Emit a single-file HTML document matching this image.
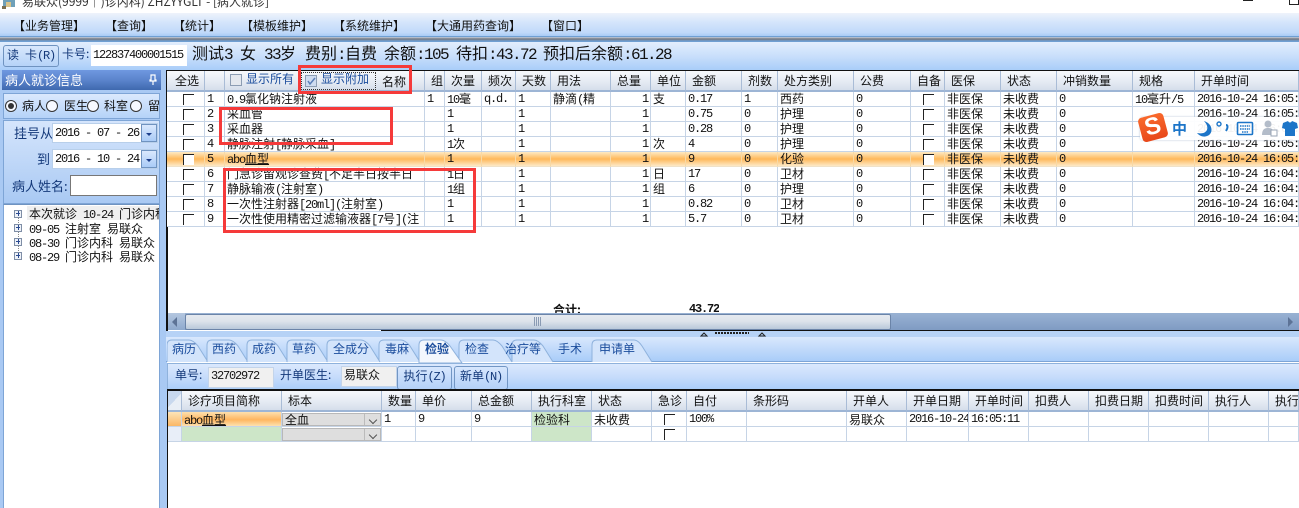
<!DOCTYPE html>
<html><head><meta charset="utf-8"><style>
html,body{margin:0;padding:0}
body{width:1299px;height:508px;overflow:hidden;position:relative;background:#fff;font:12px/15px "WenQuanYi Zen Hei","Noto Sans CJK SC",sans-serif;color:#111}
.a,.a *{box-sizing:border-box}
.a{position:absolute;white-space:pre}
.b{color:#14397a}
.m{font-family:"Liberation Mono",monospace;font-weight:normal;letter-spacing:-1.2px;font-size:12px}
.n{font-family:"Liberation Mono",monospace;font-weight:normal;letter-spacing:-1.6px;font-size:16px}
span.m,span.n{line-height:1px}
table{border-collapse:separate;border-spacing:0;table-layout:fixed;position:absolute;left:167px;width:1132px;background:#fff}
td,th{height:15px;padding:0 0 0 2px;border-right:1px solid #c6d4e6;border-bottom:1px solid #c6d4e6;overflow:hidden;white-space:pre;font-weight:normal;text-align:left;line-height:14px;box-sizing:border-box}
th{height:20px;background:linear-gradient(#f7f9fc,#e9eef5 45%,#d5deeb);border-right:1px solid #a9bcd6;border-bottom:2px solid #9db5d5;padding:0 0 0 6px;line-height:19px}
.t td:nth-child(2),.t td:nth-child(7),.t td:nth-child(9),.t td:nth-child(11),.t td:nth-child(12),.t td:nth-child(14),.t td:nth-child(18),.t td:nth-child(20),.t td:nth-child(4){font-family:"Liberation Mono",monospace;letter-spacing:-1.2px}
.r{text-align:right;padding-right:2px}
.o td{background:linear-gradient(#fde9c4,#ffb85a 50%,#fdeac8);border-right-color:#f7d9a6;border-bottom-color:#f0e2c8}
.k{display:block;width:10px;height:10px;border-left:1px solid #222;border-top:1px solid #222;margin:1px auto 0 14px}
.kw{background:#fff}
.rd{position:absolute;width:12px;height:12px;border-radius:50%;border:1px solid #333;background:#f6f9ff;top:100px;box-sizing:border-box}
.red{position:absolute;border:3px solid #f53a3a;box-sizing:border-box}
.pm{position:absolute;left:14px;width:8px;height:8px;border:1px solid #7f8ea6;background:#eef2f8}
.pm:before{content:"";position:absolute;left:1px;top:2px;width:4px;height:1px;background:#2b4a90}
.pm:after{content:"";position:absolute;left:3px;top:0;width:1px;height:5px;background:#2b4a90}
.g{background:#cde6c8!important}
.sel{position:relative;height:13px;margin-left:-1px;background:#dedede;border:1px solid #b8b8b8;line-height:11px;padding-left:2px;box-sizing:border-box}
.sel:after{content:"";position:absolute;right:4px;top:3px;width:5px;height:5px;border-right:1px solid #555;border-bottom:1px solid #555;transform:rotate(45deg)}
.sel:before{content:"";position:absolute;right:15px;top:0;bottom:0;width:1px;background:#bbb}
</style></head><body>

<!-- title -->
<div class="a" style="left:0;top:0;width:1299px;height:13px;overflow:hidden;background:#fff">
<svg class="a" style="left:1px;top:0" width="16" height="9"><rect x="2" y="0" width="12" height="7" fill="#6fa0b8"/><rect x="5" y="2" width="5" height="5" fill="#d9c38a"/><rect x="1" y="6" width="4" height="3" fill="#7a6f52"/></svg>
<div class="a" style="left:22px;top:-6px;font-size:12px;line-height:15px;color:#333">易联众(9999｜)诊内科) ZHZYYGLT - [病人就诊]</div>
<div class="a" style="left:1243px;top:0;width:10px;height:1px;background:#222"></div>
<div class="a" style="left:1289px;top:0;width:10px;height:5px;border:1px solid #222;border-top:0"></div>
</div>

<!-- menu -->
<div class="a" style="left:0;top:13px;width:1299px;height:24px;background:linear-gradient(#eef3fb,#d4e5fb 40%,#c0d9f9 85%,#a8cbf5);border-bottom:1px solid #6f9fd2">
<span class="a" style="left:13px;top:5px">【业务管理】</span>
<span class="a" style="left:105px;top:5px">【查询】</span>
<span class="a" style="left:173px;top:5px">【统计】</span>
<span class="a" style="left:241px;top:5px">【模板维护】</span>
<span class="a" style="left:333px;top:5px">【系统维护】</span>
<span class="a" style="left:425px;top:5px">【大通用药查询】</span>
<span class="a" style="left:541px;top:5px">【窗口】</span>
</div>
<div class="a" style="left:0;top:37px;width:1299px;height:4px;background:linear-gradient(#c4d3e6,#77797e 50%,#6f9fd2)"></div>

<!-- toolbar -->
<div class="a" style="left:0;top:41px;width:1299px;height:29px;background:linear-gradient(#e2eefd,#c9dffb 50%,#a9cdf9);border-top:1px solid #6f9fd2">
<div class="a b" style="left:3px;top:3px;width:56px;height:22px;border:1px solid #6f93c0;border-radius:3px;background:linear-gradient(#d8e8fc,#b6d3f8);padding-left:3px;line-height:18px">读<span class="m"> </span>卡<span class="m">(R)</span></div>
<span class="a b" style="left:62px;top:4px">卡号:</span>
<div class="a m" style="left:91px;top:3px;width:96px;height:21px;background:#fff;line-height:20px;padding-left:2px">122837400001515</div>
<span class="a" style="left:192px;top:0;font-size:16px;line-height:20px">测试<span class="n">3</span></span>
<span class="a" style="left:240px;top:0;font-size:16px;line-height:20px">女</span>
<span class="a" style="left:264px;top:0;font-size:16px;line-height:20px"><span class="n">33</span>岁</span>
<span class="a" style="left:305px;top:0;font-size:16px;line-height:20px">费别<span class="n">:</span>自费</span>
<span class="a" style="left:384px;top:0;font-size:16px;line-height:20px">余额<span class="n">:105</span></span>
<span class="a" style="left:456px;top:0;font-size:16px;line-height:20px">待扣<span class="n">:43.72</span></span>
<span class="a" style="left:543px;top:0;font-size:16px;line-height:20px">预扣后余额<span class="n">:61.28</span></span>
</div>

<!-- left panel -->
<div class="a" style="left:0;top:70px;width:167px;height:438px;background:#a9c9f3"></div>
<div class="a" style="left:2px;top:70px;width:159px;height:20px;background:linear-gradient(#6f98e0,#5b84cc 50%,#3f69ae);color:#fff;font-size:13px;line-height:19px;padding-left:3px">病人就诊信息</div>
<svg class="a" style="left:148px;top:74px" width="10" height="12"><path d="M3 1h4v5h1v1H2V6h1zM5 7v4" fill="none" stroke="#fff" stroke-width="1.2"/></svg>
<div class="a" style="left:3px;top:93px;width:157px;height:26px;background:linear-gradient(#dbe9fd,#b5d3f8);border:1px solid #7ea5d6"></div>
<div class="rd" style="left:5px"><div class="a" style="left:2px;top:2px;width:6px;height:6px;border-radius:50%;background:#333"></div></div>
<span class="a" style="left:22px;top:98px">病人</span>
<div class="rd" style="left:46px"></div><span class="a" style="left:64px;top:98px">医生</span>
<div class="rd" style="left:87px"></div><span class="a" style="left:104px;top:98px">科室</span>
<div class="rd" style="left:130px"></div><span class="a" style="left:148px;top:98px">留</span>
<div class="a" style="left:3px;top:120px;width:157px;height:84px;background:linear-gradient(#d5e5fc,#a9c9f3);border:1px solid #7ea5d6"></div>
<span class="a b" style="left:14px;top:125px;font-size:13px">挂号从</span>
<div class="a m" style="left:52px;top:123px;width:106px;height:20px;background:#fff;border:1px solid #b8cfea;line-height:18px;padding-left:2px">2016 - 07 - 26</div>
<div class="a" style="left:141px;top:124px;width:16px;height:18px;background:linear-gradient(#d9e8fd,#a9cbf7);border:1px solid #6f93c0"><div class="a" style="left:4px;top:8px;border:3px solid transparent;border-top:3px solid #1c3f8c;border-bottom:0"></div></div>
<span class="a b" style="left:37px;top:151px;font-size:13px">到</span>
<div class="a m" style="left:52px;top:149px;width:106px;height:20px;background:#fff;border:1px solid #b8cfea;line-height:18px;padding-left:2px">2016 - 10 - 24</div>
<div class="a" style="left:141px;top:150px;width:16px;height:18px;background:linear-gradient(#d9e8fd,#a9cbf7);border:1px solid #6f93c0"><div class="a" style="left:4px;top:8px;border:3px solid transparent;border-top:3px solid #1c3f8c;border-bottom:0"></div></div>
<span class="a b" style="left:12px;top:178px;font-size:13px">病人姓名:</span>
<div class="a" style="left:70px;top:175px;width:87px;height:21px;background:#fff;border:1px solid #777"></div>
<div class="a" style="left:3px;top:204px;width:157px;height:304px;background:#fff;border-top:1px solid #6f93c0;border-left:1px solid #7ea5d6;border-right:1px solid #7ea5d6;overflow:hidden">
<div class="a" style="left:23px;top:1px;width:134px;height:14px;background:#efefef"></div>
<div class="a" style="left:14px;top:10px;width:0;height:44px;border-left:1px dotted #888"></div>
<div class="pm" style="left:10px;top:5px"></div><span class="a" style="left:25px;top:1px">本次就诊<span class="m"> 10-24 </span>门诊内科</span>
<div class="pm" style="left:10px;top:19px"></div><span class="a" style="left:25px;top:16px"><span class="m">09-05 </span>注射室<span class="m"> </span>易联众</span>
<div class="pm" style="left:10px;top:33px"></div><span class="a" style="left:25px;top:30px"><span class="m">08-30 </span>门诊内科<span class="m"> </span>易联众</span>
<div class="pm" style="left:10px;top:47px"></div><span class="a" style="left:25px;top:44px"><span class="m">08-29 </span>门诊内科<span class="m"> </span>易联众</span>
</div>

<!-- main black edges -->
<div class="a" style="left:166px;top:70px;width:1133px;height:2px;background:#111"></div>
<div class="a" style="left:166px;top:70px;width:2px;height:261px;background:#111"></div>

<!-- top table -->
<table class="t" style="top:71px">
<colgroup><col width="38"><col width="20"><col width="200"><col width="20"><col width="37"><col width="34"><col width="35"><col width="60"><col width="40"><col width="35"><col width="56"><col width="36"><col width="76"><col width="57"><col width="34"><col width="56"><col width="56"><col width="76"><col width="62"><col width="104"></colgroup>
<tr><th style="padding-left:8px">全选</th><th></th><th></th><th>组</th><th>次量</th><th>频次</th><th>天数</th><th>用法</th><th>总量</th><th>单位</th><th>金额</th><th>剂数</th><th>处方类别</th><th>公费</th><th>自备</th><th>医保</th><th>状态</th><th>冲销数量</th><th>规格</th><th>开单时间</th></tr>
<tr><td><i class="k"></i></td><td>1</td><td><span class="m">0.9</span>氯化钠注射液</td><td>1</td><td><span class="m">10</span>毫</td><td class="m">q.d.</td><td>1</td><td>静滴<span class="m">(</span>精</td><td class="r">1</td><td>支</td><td>0.17</td><td>1</td><td>西药</td><td>0</td><td><i class="k" style="margin-left:10px"></i></td><td>非医保</td><td>未收费</td><td>0</td><td><span class="m">10</span>毫升<span class="m">/5</span></td><td>2016-10-24 16:05:</td></tr>
<tr><td><i class="k"></i></td><td>2</td><td>采血管</td><td></td><td class="m">1</td><td></td><td>1</td><td></td><td class="r">1</td><td></td><td>0.75</td><td>0</td><td>护理</td><td>0</td><td><i class="k" style="margin-left:10px"></i></td><td>非医保</td><td>未收费</td><td>0</td><td></td><td>2016-10-24 16:05:</td></tr>
<tr><td><i class="k"></i></td><td>3</td><td>采血器</td><td></td><td class="m">1</td><td></td><td>1</td><td></td><td class="r">1</td><td></td><td>0.28</td><td>0</td><td>护理</td><td>0</td><td><i class="k" style="margin-left:10px"></i></td><td>非医保</td><td>未收费</td><td>0</td><td></td><td>2016-10-24 16:05:</td></tr>
<tr><td><i class="k"></i></td><td>4</td><td>静脉注射<span class="m">[</span>静脉采血<span class="m">]</span></td><td></td><td><span class="m">1</span>次</td><td></td><td>1</td><td></td><td class="r">1</td><td>次</td><td>4</td><td>0</td><td>护理</td><td>0</td><td><i class="k" style="margin-left:10px"></i></td><td>非医保</td><td>未收费</td><td>0</td><td></td><td>2016-10-24 16:05:</td></tr>
<tr class="o"><td><i class="k kw"></i></td><td>5</td><td><span class="m">abo</span><u>血型</u></td><td></td><td class="m">1</td><td></td><td>1</td><td></td><td class="r">1</td><td></td><td>9</td><td>0</td><td>化验</td><td>0</td><td><i class="k kw" style="margin-left:10px"></i></td><td>非医保</td><td>未收费</td><td>0</td><td></td><td>2016-10-24 16:05:</td></tr>
<tr><td><i class="k"></i></td><td>6</td><td>门急诊留观诊查费<span class="m">[</span>不足半日按半日</td><td></td><td><span class="m">1</span>日</td><td></td><td>1</td><td></td><td class="r">1</td><td>日</td><td>17</td><td>0</td><td>卫材</td><td>0</td><td><i class="k" style="margin-left:10px"></i></td><td>非医保</td><td>未收费</td><td>0</td><td></td><td>2016-10-24 16:04:</td></tr>
<tr><td><i class="k"></i></td><td>7</td><td>静脉输液<span class="m">(</span>注射室<span class="m">)</span></td><td></td><td><span class="m">1</span>组</td><td></td><td>1</td><td></td><td class="r">1</td><td>组</td><td>6</td><td>0</td><td>护理</td><td>0</td><td><i class="k" style="margin-left:10px"></i></td><td>非医保</td><td>未收费</td><td>0</td><td></td><td>2016-10-24 16:04:</td></tr>
<tr><td><i class="k"></i></td><td>8</td><td>一次性注射器<span class="m">[20ml](</span>注射室<span class="m">)</span></td><td></td><td class="m">1</td><td></td><td>1</td><td></td><td class="r">1</td><td></td><td>0.82</td><td>0</td><td>卫材</td><td>0</td><td><i class="k" style="margin-left:10px"></i></td><td>非医保</td><td>未收费</td><td>0</td><td></td><td>2016-10-24 16:04:</td></tr>
<tr><td><i class="k"></i></td><td>9</td><td>一次性使用精密过滤输液器<span class="m">[7</span>号<span class="m">](</span>注</td><td></td><td class="m">1</td><td></td><td>1</td><td></td><td class="r">1</td><td></td><td>5.7</td><td>0</td><td>卫材</td><td>0</td><td><i class="k" style="margin-left:10px"></i></td><td>非医保</td><td>未收费</td><td>0</td><td></td><td>2016-10-24 16:04:</td></tr>
</table>

<!-- header controls in name column -->
<div class="a" style="left:230px;top:74px;width:12px;height:12px;border:1px solid #8c9db3;background:#e4e8ee"></div>
<span class="a" style="left:246px;top:71px;color:#1a4c9c">显示所有</span>
<div class="a" style="left:301px;top:72px;width:75px;height:18px;border:1px dotted #333"></div>
<div class="a" style="left:305px;top:75px;width:12px;height:12px;border:1px solid #8c9db3;background:#cfdcf0"></div>
<svg class="a" style="left:306px;top:76px" width="11" height="11"><path d="M2 5l2 3 5-6" fill="none" stroke="#5a7fb8" stroke-width="1.5"/></svg>
<span class="a" style="left:321px;top:71px;color:#1a4c9c">显示附加</span>
<span class="a" style="left:382px;top:74px">名称</span>

<!-- total -->
<div class="a" style="left:553px;top:302px;height:11px;overflow:hidden;font-weight:bold">合计:</div>
<div class="a m" style="left:689px;top:302px;height:11px;overflow:hidden;font-weight:bold">43.72</div>

<!-- scrollbar -->
<div class="a" style="left:168px;top:313px;width:1131px;height:17px;background:linear-gradient(#99b2d3,#7f9bc3)"></div>
<div class="a" style="left:168px;top:313px;width:17px;height:17px;background:linear-gradient(#b4c7e0,#8ea9cd)"><div class="a" style="left:4px;top:4px;border:5px solid transparent;border-right:5px solid #5d7396;border-left:0"></div></div>
<div class="a" style="left:185px;top:314px;width:706px;height:16px;background:linear-gradient(#e6eaf0,#dde3ea 45%,#b9c8da);border:1px solid #6b84a8;border-radius:2px"></div>
<div class="a" style="left:534px;top:317px;width:8px;height:9px;background:repeating-linear-gradient(90deg,#8a9bb3 0 1px,transparent 1px 2px)"></div>
<div class="a" style="left:1288px;top:317px;border:5px solid transparent;border-left:5px solid #5d7396;border-right:0"></div>
<div class="a" style="left:381px;top:330px;width:918px;height:1px;background:#111"></div>

<!-- splitter + tab strip -->
<div class="a" style="left:166px;top:331px;width:1133px;height:6px;background:#b6d2f6"></div>
<svg class="a" style="left:700px;top:331px" width="70" height="6"><path d="M1 5l3-3 3 3zM59 5l3-3 3 3z" fill="none" stroke="#222"/><path d="M15 2h34" stroke="#222" stroke-width="2" stroke-dasharray="2 1"/></svg>
<div class="a" style="left:166px;top:337px;width:1133px;height:25px;background:linear-gradient(#d9e8fd,#bcd7fa 60%,#a9cdf9);border-bottom:1px solid #7ea5d6"></div>
<svg class="a" style="left:167px;top:337px" width="500" height="26">
<g fill="#d3e4fb" stroke="#8fb2dc">
<path d="M425 25V8Q425 3 430 3H467Q471 3 475 9L485 25"/>
<path d="M385 25V8Q385 3 390 3H407Q411 3 416 9L426 25" transform="translate(-173 0)"/>
<path d="M0 25V8Q0 3 5 3H22Q26 3 31 9L41 25"/>
<path d="M40 25V8Q40 3 45 3H62Q66 3 71 9L81 25"/>
<path d="M80 25V8Q80 3 85 3H102Q106 3 111 9L121 25"/>
<path d="M120 25V8Q120 3 125 3H142Q146 3 151 9L161 25"/>
<path d="M160 25V8Q160 3 165 3H194Q198 3 203 9L213 25"/>
<path d="M292 25V8Q292 3 297 3H326Q330 3 335 9L345 25"/>
<path d="M345 25V8Q345 3 350 3H367Q371 3 376 9L386 25"/>
</g>
<path d="M252 26V8Q252 3 257 3H274Q278 3 283 9L295 26Z" fill="#f3f7fd" stroke="#8fb2dc"/>
</svg>
<span class="a b" style="left:172px;top:341px;font-size:12px;color:#1a4c9c">病历</span>
<span class="a" style="left:212px;top:341px;color:#1a4c9c">西药</span>
<span class="a" style="left:252px;top:341px;color:#1a4c9c">成药</span>
<span class="a" style="left:292px;top:341px;color:#1a4c9c">草药</span>
<span class="a" style="left:333px;top:341px;color:#1a4c9c">全成分</span>
<span class="a" style="left:385px;top:341px;color:#1a4c9c">毒麻</span>
<span class="a" style="left:425px;top:341px;font-weight:bold;color:#1a4c9c">检验</span>
<span class="a" style="left:465px;top:341px;color:#1a4c9c">检查</span>
<span class="a" style="left:505px;top:341px;color:#1a4c9c">治疗等</span>
<span class="a" style="left:558px;top:341px;color:#1a4c9c">手术</span>
<span class="a" style="left:599px;top:341px;color:#1a4c9c">申请单</span>

<!-- order toolbar -->
<div class="a" style="left:167px;top:363px;width:1132px;height:27px;background:linear-gradient(#dbe9fd,#c6dcfb 50%,#a9cdf9);border-top:1px solid #8fb2dc;border-left:1px solid #8fb2dc">
<span class="a b" style="left:7px;top:3px">单号:</span>
<div class="a m" style="left:40px;top:3px;width:66px;height:21px;background:#f0f0f0;border:1px solid #c3d4ea;line-height:17px;padding-left:2px">32702972</div>
<span class="a b" style="left:112px;top:3px">开单医生:</span>
<div class="a" style="left:173px;top:2px;width:56px;height:21px;background:#f0f0f0;border:1px solid #c3d4ea;line-height:15px;padding-left:2px">易联众</div>
<div class="a b" style="left:229px;top:2px;width:55px;height:24px;border:1px solid #7296c4;border-radius:3px;background:linear-gradient(#d7e7fd,#b4d1f8);text-align:center;line-height:18px">执行<span class="m">(Z)</span></div>
<div class="a b" style="left:286px;top:2px;width:54px;height:24px;border:1px solid #7296c4;border-radius:3px;background:linear-gradient(#d7e7fd,#b4d1f8);text-align:center;line-height:18px">新单<span class="m">(N)</span></div>
</div>

<!-- bottom table -->
<div class="a" style="left:167px;top:389px;width:1132px;height:2px;background:#111"></div>
<div class="a" style="left:167px;top:389px;width:1px;height:119px;background:#111"></div>
<table style="top:391px;left:168px;width:1131px">
<colgroup><col width="14"><col width="100"><col width="100"><col width="34"><col width="56"><col width="60"><col width="60"><col width="60"><col width="35"><col width="60"><col width="100"><col width="60"><col width="62"><col width="60"><col width="60"><col width="60"><col width="60"><col width="60"><col width="30"></colgroup>
<tr><th style="background:linear-gradient(135deg,#c8d8ee 50%,#e8eef6 50%)"></th><th>诊疗项目简称</th><th>标本</th><th>数量</th><th>单价</th><th>总金额</th><th>执行科室</th><th>状态</th><th>急诊</th><th>自付</th><th>条形码</th><th>开单人</th><th>开单日期</th><th>开单时间</th><th>扣费人</th><th>扣费日期</th><th>扣费时间</th><th>执行人</th><th>执行</th></tr>
<tr style="height:15px"><td style="background:linear-gradient(#fde4b8,#fbb765)"></td><td style="background:linear-gradient(#fde0ae,#ffb660 55%,#fde2b0);line-height:13px"><span class="m">abo</span><u>血型</u></td><td style="padding:0 0 0 1px"><div class="sel">全血</div></td><td class="m" style="line-height:13px">1</td><td class="m" style="line-height:13px">9</td><td class="m" style="line-height:13px">9</td><td class="g" style="line-height:13px">检验科</td><td style="line-height:13px">未收费</td><td><i class="k" style="margin-left:10px"></i></td><td class="m" style="line-height:13px">100%</td><td></td><td style="line-height:13px">易联众</td><td class="m" style="line-height:13px">2016-10-24</td><td class="m" style="line-height:13px">16:05:11</td><td></td><td></td><td></td><td></td><td></td></tr>
<tr style="height:15px"><td style="background:#e8eef8"></td><td class="g"></td><td style="padding:0 0 0 1px"><div class="sel"></div></td><td></td><td></td><td></td><td class="g"></td><td></td><td><i class="k" style="margin-left:10px"></i></td><td></td><td></td><td></td><td></td><td></td><td></td><td></td><td></td><td></td><td></td></tr>
</table>

<!-- red annotation boxes -->
<div class="red" style="left:298px;top:65px;width:114px;height:29px"></div>
<div class="red" style="left:219px;top:107px;width:174px;height:38px"></div>
<div class="red" style="left:223px;top:168px;width:253px;height:65px"></div>

<!-- sogou bar -->
<div class="a" style="left:1140px;top:117px;width:159px;height:23px;background:rgba(255,255,255,.94);border-radius:3px 0 0 3px;box-shadow:0 0 2px #b9c5d6"></div>
<div class="a" style="left:1140px;top:115px;width:26px;height:25px;background:linear-gradient(#f9692c,#e8481a);border-radius:4px;transform:rotate(-15deg);color:#fff;font:bold 24px/24px 'Liberation Sans',sans-serif;text-align:center">S</div>
<span class="a" style="left:1172px;top:121px;font-size:15px;font-weight:bold;color:#1c75c8">中</span>
<svg class="a" style="left:1195px;top:118px" width="104" height="22">
<path d="M9 3C15 9 13 17 2 15C8 22 19 18 16 9C15 6 12 4 9 3Z" fill="#1c75c8"/>
<circle cx="24" cy="6" r="2" fill="none" stroke="#1c75c8" stroke-width="1.4"/>
<path d="M31 7c2 0 2 3 0 6" fill="none" stroke="#1c75c8" stroke-width="2"/>
<rect x="42.500" y="4.500" width="15" height="12" rx="1" fill="none" stroke="#1c75c8" stroke-width="1.600"/>
<path d="M45 8h10M45 11h10M47 14h6" stroke="#1c75c8" stroke-width="1.500" stroke-dasharray="1.500 .8"/>
<circle cx="73" cy="6" r="3.500" fill="#b3bcc9"/><path d="M67 17c0-6 3-7 6-7s5 1 5 3v4z" fill="#b3bcc9"/><rect x="76" y="12" width="6" height="6" fill="#fff" stroke="#9aa5b5"/>
<path d="M93 3l-5 2-1 5 3 1v7h10v-7l3-1-1-5-5-2c-1 2-3 2-4 0z" fill="#1c75c8"/>
</svg>
</body></html>
